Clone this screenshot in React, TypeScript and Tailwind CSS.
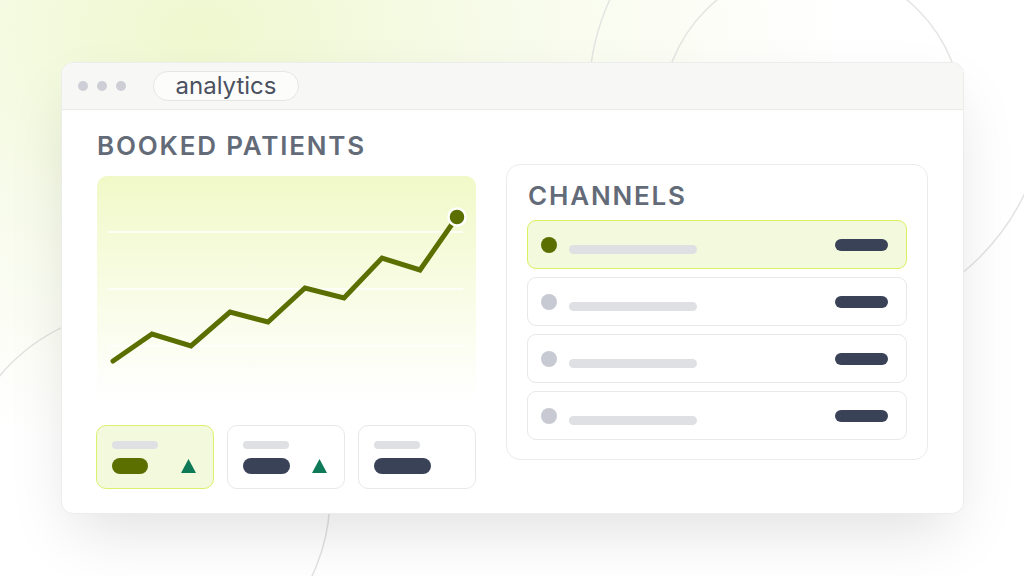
import React from "react";

const font = { fontFamily: "Inter, 'Noto Sans', sans-serif" };

function MiniCard({ active, pillW, pillColor, tri }: { active?: boolean; pillW: number; pillColor: string; tri?: boolean }) {
  return (
    <div
      className={
        "w-[118px] h-[64px] rounded-[10px] border flex flex-col pl-[15px] pr-[17px] pt-[15px] " +
        (active ? "bg-[#f2f9dc] border-[#dcf06e]" : "bg-white border-[#e8e8e6]")
      }
    >
      <div className="w-[46px] h-[8px] rounded-full bg-[#dfe0e4]" />
      <div className="mt-[9px] flex items-center justify-between">
        <div className="h-[16px] rounded-full" style={{ width: pillW, backgroundColor: pillColor }} />
        {tri && (
          <svg width="15" height="14" viewBox="0 0 15 14">
            <polygon points="7.5,0 15,14 0,14" fill="#0f7a57" />
          </svg>
        )}
      </div>
    </div>
  );
}

function ChannelRow({ active }: { active?: boolean }) {
  return (
    <div
      className={
        "w-[380px] h-[49px] rounded-[9px] border flex items-center pl-[13px] pr-[18px] " +
        (active ? "bg-[#f2f9dc] border-[#daf060]" : "bg-white border-[#e8e8e6]")
      }
    >
      <div className={"w-[16px] h-[16px] rounded-full " + (active ? "bg-[#5b6e00]" : "bg-[#c8cad3]")} />
      <div className="ml-[12px] mt-[9px] w-[128px] h-[9px] rounded-full bg-[#dfe0e4]" />
      <div className="ml-auto w-[53px] h-[12px] rounded-full bg-[#3a4258]" />
    </div>
  );
}

export default function App() {
  const pts: [number, number][] = [
    [16, 185],
    [55, 158],
    [94, 170],
    [133, 136],
    [171, 146],
    [208, 112],
    [247, 122],
    [285, 82],
    [323, 94],
    [360, 41],
  ];
  const d = pts.map((p, i) => (i === 0 ? "M" : "L") + p[0] + " " + p[1]).join(" ");
  return (
    <div
      className="relative w-[1024px] h-[576px] overflow-hidden bg-[radial-gradient(ellipse_640px_420px_at_200px_30px,#eff8cf_0%,#f7fbe9_45%,#ffffff_100%)]"
      style={font}
    >
      <svg className="absolute inset-0" width="1024" height="576" viewBox="0 0 1024 576" fill="none">
        <circle cx="818" cy="95" r="229" stroke="#e4e4e2" strokeWidth="1.5" />
        <circle cx="812" cy="116" r="150" stroke="#e4e4e2" strokeWidth="1.5" />
        <circle cx="143" cy="496" r="187" stroke="#e2e2e0" strokeWidth="1.5" />
      </svg>
      <div className="relative pt-[62px] pl-[61px]">
        <div className="w-[903px] h-[452px] rounded-[12px] bg-white border border-[#ececea] shadow-[0_26px_60px_-12px_rgba(0,0,0,0.13)] overflow-hidden flex flex-col">
          <div className="h-[47px] shrink-0 bg-[#f7f7f5] border-b border-[#e9e9e6] flex items-center pl-[16px]">
            <div className="flex items-center gap-[9px]">
              <div className="w-[10px] h-[10px] rounded-full bg-[#cdced6]" />
              <div className="w-[10px] h-[10px] rounded-full bg-[#cdced6]" />
              <div className="w-[10px] h-[10px] rounded-full bg-[#cdced6]" />
            </div>
            <div className="ml-[27px] w-[146px] h-[30px] rounded-full border border-[#e5e5e2] bg-[#fcfcfb] flex items-center justify-center text-[24px] leading-none text-[#4b5160]">
              analytics
            </div>
          </div>
          <div className="flex pl-[34px] pr-[35px] gap-[30px]">
            <div className="w-[380px] flex flex-col pt-[21px]">
              <div className="ml-[1px] text-[26px] leading-[30px] font-semibold tracking-[0.07em] text-[#646b78]">BOOKED PATIENTS</div>
              <div className="ml-[1px] mt-[15px] w-[379px] h-[224px] rounded-[10px] bg-gradient-to-b from-[#f1f9c8] to-[#ffffff]">
                <svg width="379" height="224" viewBox="0 0 379 224" fill="none">
                  <line x1="11" y1="56" x2="366" y2="56" stroke="#ffffff" strokeWidth="1.5" />
                  <line x1="11" y1="113" x2="366" y2="113" stroke="#ffffff" strokeWidth="1.5" />
                  <line x1="11" y1="170" x2="366" y2="170" stroke="#ffffff" strokeWidth="1.5" opacity="0.8" />
                  <path d={d} stroke="#5b6e00" strokeWidth="5" strokeLinecap="round" strokeLinejoin="miter" />
                  <circle cx="360" cy="41" r="8.5" fill="#5b6e00" stroke="#ffffff" strokeWidth="2.5" />
                </svg>
              </div>
              <div className="mt-[25px] flex gap-[13px]">
                <MiniCard active pillW={36} pillColor="#5b6e00" tri />
                <MiniCard pillW={47} pillColor="#3a4258" tri />
                <MiniCard pillW={57} pillColor="#3a4258" />
              </div>
            </div>
            <div className="mt-[54px] w-[422px] h-[296px] rounded-[14px] border border-[#ebebe9] bg-white flex flex-col pl-[20px] pt-[16px]">
              <div className="ml-[1px] text-[26px] leading-[30px] font-semibold tracking-[0.07em] text-[#646b78]">CHANNELS</div>
              <div className="mt-[9px] flex flex-col gap-[8px]">
                <ChannelRow active />
                <ChannelRow />
                <ChannelRow />
                <ChannelRow />
              </div>
            </div>
          </div>
        </div>
      </div>
    </div>
  );
}
